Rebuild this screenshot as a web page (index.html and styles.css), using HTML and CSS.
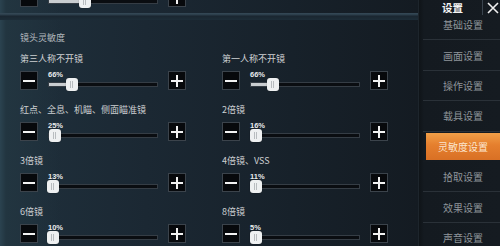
FILE: index.html
```html
<!DOCTYPE html>
<html lang="zh">
<head>
<meta charset="utf-8">
<link rel="stylesheet" href="styles.css">
</head>
<body>
<div class="app">
  <main class="main">
    <div class="prev">
      <div class="ctrl">
        <div class="box"><svg width="12" height="12" viewBox="0 0 12 12"><rect x="0" y="5" width="12" height="2" fill="#f2f2f2"/></svg></div>
        <div class="slider">
          <div class="pct"></div>
          <div class="track"><div class="fill" style="width:32px"></div></div>
          <div class="thumb" style="left:31px"></div>
        </div>
        <div class="box"><svg width="12" height="12" viewBox="0 0 12 12"><rect x="0" y="5" width="12" height="2" fill="#f2f2f2"/><rect x="5" y="0" width="2" height="12" fill="#f2f2f2"/></svg></div>
      </div>
    </div>
    <div class="divider"></div>
    <div class="section-title">镜头灵敏度</div>
    <div class="grid">
      <div class="item">
        <div class="label">第三人称不开镜</div>
        <div class="ctrl">
          <div class="box"><svg width="12" height="12" viewBox="0 0 12 12"><rect x="0" y="5" width="12" height="2" fill="#f2f2f2"/></svg></div>
          <div class="slider">
            <div class="pct">66%</div>
            <div class="track"><div class="fill" style="width:19px"></div></div>
            <div class="thumb" style="left:18px"></div>
          </div>
          <div class="box"><svg width="12" height="12" viewBox="0 0 12 12"><rect x="0" y="5" width="12" height="2" fill="#f2f2f2"/><rect x="5" y="0" width="2" height="12" fill="#f2f2f2"/></svg></div>
        </div>
      </div>
      <div class="item">
        <div class="label">第一人称不开镜</div>
        <div class="ctrl">
          <div class="box"><svg width="12" height="12" viewBox="0 0 12 12"><rect x="0" y="5" width="12" height="2" fill="#f2f2f2"/></svg></div>
          <div class="slider">
            <div class="pct">66%</div>
            <div class="track"><div class="fill" style="width:18px"></div></div>
            <div class="thumb" style="left:17px"></div>
          </div>
          <div class="box"><svg width="12" height="12" viewBox="0 0 12 12"><rect x="0" y="5" width="12" height="2" fill="#f2f2f2"/><rect x="5" y="0" width="2" height="12" fill="#f2f2f2"/></svg></div>
        </div>
      </div>
      <div class="item">
        <div class="label">红点、全息、机瞄、侧面瞄准镜</div>
        <div class="ctrl">
          <div class="box"><svg width="12" height="12" viewBox="0 0 12 12"><rect x="0" y="5" width="12" height="2" fill="#f2f2f2"/></svg></div>
          <div class="slider">
            <div class="pct">25%</div>
            <div class="track"><div class="fill" style="width:2px"></div></div>
            <div class="thumb" style="left:1px"></div>
          </div>
          <div class="box"><svg width="12" height="12" viewBox="0 0 12 12"><rect x="0" y="5" width="12" height="2" fill="#f2f2f2"/><rect x="5" y="0" width="2" height="12" fill="#f2f2f2"/></svg></div>
        </div>
      </div>
      <div class="item">
        <div class="label">2倍镜</div>
        <div class="ctrl">
          <div class="box"><svg width="12" height="12" viewBox="0 0 12 12"><rect x="0" y="5" width="12" height="2" fill="#f2f2f2"/></svg></div>
          <div class="slider">
            <div class="pct">16%</div>
            <div class="track"><div class="fill" style="width:1px"></div></div>
            <div class="thumb" style="left:0px"></div>
          </div>
          <div class="box"><svg width="12" height="12" viewBox="0 0 12 12"><rect x="0" y="5" width="12" height="2" fill="#f2f2f2"/><rect x="5" y="0" width="2" height="12" fill="#f2f2f2"/></svg></div>
        </div>
      </div>
      <div class="item">
        <div class="label">3倍镜</div>
        <div class="ctrl">
          <div class="box"><svg width="12" height="12" viewBox="0 0 12 12"><rect x="0" y="5" width="12" height="2" fill="#f2f2f2"/></svg></div>
          <div class="slider">
            <div class="pct">13%</div>
            <div class="track"><div class="fill" style="width:0px"></div></div>
            <div class="thumb" style="left:-1px"></div>
          </div>
          <div class="box"><svg width="12" height="12" viewBox="0 0 12 12"><rect x="0" y="5" width="12" height="2" fill="#f2f2f2"/><rect x="5" y="0" width="2" height="12" fill="#f2f2f2"/></svg></div>
        </div>
      </div>
      <div class="item">
        <div class="label">4倍镜、VSS</div>
        <div class="ctrl">
          <div class="box"><svg width="12" height="12" viewBox="0 0 12 12"><rect x="0" y="5" width="12" height="2" fill="#f2f2f2"/></svg></div>
          <div class="slider">
            <div class="pct">11%</div>
            <div class="track"><div class="fill" style="width:1px"></div></div>
            <div class="thumb" style="left:0px"></div>
          </div>
          <div class="box"><svg width="12" height="12" viewBox="0 0 12 12"><rect x="0" y="5" width="12" height="2" fill="#f2f2f2"/><rect x="5" y="0" width="2" height="12" fill="#f2f2f2"/></svg></div>
        </div>
      </div>
      <div class="item">
        <div class="label">6倍镜</div>
        <div class="ctrl">
          <div class="box"><svg width="12" height="12" viewBox="0 0 12 12"><rect x="0" y="5" width="12" height="2" fill="#f2f2f2"/></svg></div>
          <div class="slider">
            <div class="pct">10%</div>
            <div class="track"><div class="fill" style="width:0px"></div></div>
            <div class="thumb" style="left:-1px"></div>
          </div>
          <div class="box"><svg width="12" height="12" viewBox="0 0 12 12"><rect x="0" y="5" width="12" height="2" fill="#f2f2f2"/><rect x="5" y="0" width="2" height="12" fill="#f2f2f2"/></svg></div>
        </div>
      </div>
      <div class="item">
        <div class="label">8倍镜</div>
        <div class="ctrl">
          <div class="box"><svg width="12" height="12" viewBox="0 0 12 12"><rect x="0" y="5" width="12" height="2" fill="#f2f2f2"/></svg></div>
          <div class="slider">
            <div class="pct">5%</div>
            <div class="track"><div class="fill" style="width:1px"></div></div>
            <div class="thumb" style="left:0px"></div>
          </div>
          <div class="box"><svg width="12" height="12" viewBox="0 0 12 12"><rect x="0" y="5" width="12" height="2" fill="#f2f2f2"/><rect x="5" y="0" width="2" height="12" fill="#f2f2f2"/></svg></div>
        </div>
      </div>
    </div>
  </main>
  <aside class="side">
    <div class="side-head">
      <div class="side-title">设置</div>
      <div class="head-sep"></div>
      <div class="close"><svg width="12" height="12" viewBox="0 0 12 12"><path d="M1 1 L11 11 M11 1 L1 11" stroke="#f0f0f0" stroke-width="1.6"/></svg></div>
    </div>
    <nav class="menu">
      <div class="menu-item">基础设置</div>
      <div class="menu-item">画面设置</div>
      <div class="menu-item">操作设置</div>
      <div class="menu-item">载具设置</div>
      <div class="menu-item active">灵敏度设置</div>
      <div class="menu-item">拾取设置</div>
      <div class="menu-item">效果设置</div>
      <div class="menu-item">声音设置</div>
    </nav>
  </aside>
</div>
</body>
</html>
```
FILE: styles.css
```css
html, body {
  margin: 0;
  padding: 0;
}
body {
  width: 500px;
  height: 246px;
  overflow: hidden;
  background: #141b22;
  font-family: "Noto Sans CJK SC", "Noto Sans", sans-serif;
}
.app {
  display: flex;
  width: 500px;
  height: 246px;
}
.main {
  width: 418px;
  height: 246px;
  box-sizing: border-box;
  padding-left: 20px;
  background:
    linear-gradient(90deg, #2b4350 0px, #223540 6px, rgba(34,53,64,0) 60px),
    linear-gradient(90deg, #1f303c 0%, #1b2833 35%, #17212a 70%, #141b22 100%);
  overflow: hidden;
}
.prev {
  margin-top: -12px;
}
.divider {
  margin-top: 6px;
  margin-left: -20px;
  height: 7px;
  background: linear-gradient(180deg, #364a58 0px, #2a3c49 2px, #1a2630 3px, #1d2d38 7px);
}
.section-title {
  margin-top: 12px;
  height: 12px;
  line-height: 12px;
  font-size: 9px;
  color: #b3b9bd;
  white-space: nowrap;
}
.grid {
  margin-top: 9px;
  display: grid;
  grid-template-columns: 166px 166px;
  column-gap: 36px;
  row-gap: 14px;
}
.item {
  display: flex;
  flex-direction: column;
  gap: 6px;
}
.label {
  height: 12px;
  line-height: 12px;
  font-size: 9px;
  color: #cdd0d2;
  white-space: nowrap;
}
.ctrl {
  display: flex;
  align-items: flex-start;
  gap: 10px;
  height: 19px;
}
.box {
  width: 18px;
  height: 19px;
  flex: none;
  box-sizing: border-box;
  border: 1px solid #3b434b;
  background: #07090c;
  display: flex;
  align-items: center;
  justify-content: center;
}
.box svg {
  display: block;
}
.slider {
  position: relative;
  width: 110px;
  height: 19px;
  flex: none;
}
.pct {
  height: 7px;
  line-height: 7px;
  font-family: "Liberation Sans", Arial, sans-serif;
  font-weight: bold;
  font-size: 7.5px;
  color: #e9ebec;
  white-space: nowrap;
}
.track {
  margin-top: 4px;
  height: 5px;
  box-sizing: border-box;
  border: 1px solid #353d45;
  background: #0a0d11;
}
.fill {
  height: 100%;
  background: #c9cdd0;
}
.thumb {
  position: absolute;
  top: 7px;
  width: 12px;
  height: 13px;
  border-radius: 3px;
  background: #eef0f1;
  box-shadow: 0 0 1px rgba(0,0,0,0.6);
}
.thumb::after {
  content: "";
  position: absolute;
  left: 4px;
  top: 3px;
  width: 4px;
  height: 7px;
  background: repeating-linear-gradient(90deg, #b8bcbf 0 1px, transparent 1px 2px);
}
.side {
  width: 82px;
  height: 246px;
  box-sizing: border-box;
  border-left: 1px solid #1d252c;
  background: linear-gradient(90deg, #0f1418 0px, #141a20 5px, #151b21 100%);
  display: flex;
  flex-direction: column;
}
.side-head {
  height: 15px;
  display: flex;
  align-items: center;
  flex: none;
}
.side-title {
  margin-left: 23px;
  width: 40px;
  font-size: 10.5px;
  line-height: 15px;
  font-weight: bold;
  color: #f4f4f4;
  white-space: nowrap;
}
.head-sep {
  width: 1px;
  height: 15px;
  background: #3a444e;
}
.close {
  margin-left: 4px;
  width: 12px;
  height: 12px;
}
.close svg {
  display: block;
}
.menu {
  margin-top: -5px;
  margin-left: 4px;
  display: flex;
  flex-direction: column;
}
.menu-item {
  height: 30.4px;
  box-sizing: border-box;
  border-bottom: 1px solid #2a3138;
  display: flex;
  align-items: center;
  justify-content: center;
  padding-left: 3px;
  font-size: 10px;
  color: #8f959a;
  white-space: nowrap;
}
.menu-item.active {
  padding-top: 1px;
  padding-bottom: 1px;
  background: linear-gradient(180deg, #f3a24a 0%, #e57f2e 45%, #d86f24 100%);
  background-clip: content-box;
  color: #fbe6cf;
  border-bottom-color: #151b21;
}
```
